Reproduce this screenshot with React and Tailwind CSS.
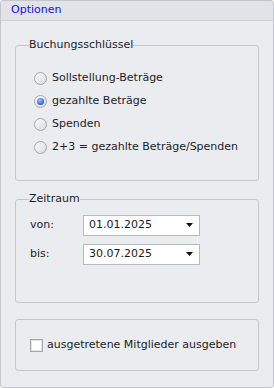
import React from "react";

const font = { fontFamily: '"DejaVu Sans", Tahoma, sans-serif' };

function Radio({ checked, label }) {
  return (
    <div className="flex items-center h-[23px]">
      <span className="relative w-[13px] h-[13px] rounded-full border border-[#a4a6ae] bg-gradient-to-br from-[#fbfbfc] to-[#d9dadf] flex items-center justify-center shrink-0">
        {checked && (
          <span className="w-[7px] h-[7px] rounded-full bg-[radial-gradient(circle_at_40%_35%,#9fc0ff,#2c5fd8_70%)]" />
        )}
      </span>
      <span className="ml-[5px] text-[11px] text-[#1c1c24]">{label}</span>
    </div>
  );
}

function Combo({ value }) {
  return (
    <div className="flex items-center w-[117px] h-[21px] bg-white border border-[#b7b9c0] pl-[5px] pr-[6px]">
      <span className="flex-1 text-[11px] text-[#1c1c24]">{value}</span>
      <svg width="7" height="4" viewBox="0 0 7 4"><path d="M0 0h7L3.5 4z" fill="#111" /></svg>
    </div>
  );
}

export default function App() {
  return (
    <div className="w-[274px] h-[388px] bg-white" style={font}>
      <div className="w-[274px] h-[388px] border border-[#c4c6cd] rounded-[3px] bg-[#ebecf0] flex flex-col overflow-hidden">
        <div className="h-[20px] bg-[#e2e3e8] border-b border-[#d0d2d8] flex items-center pl-[10px] shrink-0">
          <span className="text-[11px] text-[#1010f0]">Optionen</span>
        </div>
        <div className="flex flex-col px-[14px]">
          <fieldset className="mt-[16px] h-[144px] border border-[#c4c6cd] rounded-[3px] px-0">
            <legend className="ml-[13px] px-0 text-[11px] text-[#1c1c24]">Buchungsschlüssel</legend>
            <div className="mt-[13px] pl-[18px] flex flex-col">
              <Radio label="Sollstellung-Beträge" />
              <Radio checked label="gezahlte Beträge" />
              <Radio label="Spenden" />
              <Radio label="2+3 = gezahlte Beträge/Spenden" />
            </div>
          </fieldset>
          <fieldset className="mt-[10px] h-[112px] border border-[#c4c6cd] rounded-[3px] px-0">
            <legend className="ml-[13px] px-0 text-[11px] text-[#1c1c24]">Zeitraum</legend>
            <div className="mt-[7px] pl-[14px] flex flex-col gap-[8px]">
              <div className="flex items-center">
                <span className="w-[53px] text-[11px] text-[#1c1c24]">von:</span>
                <Combo value="01.01.2025" />
              </div>
              <div className="flex items-center">
                <span className="w-[53px] text-[11px] text-[#1c1c24]">bis:</span>
                <Combo value="30.07.2025" />
              </div>
            </div>
          </fieldset>
          <div className="mt-[16px] h-[52px] border border-[#c4c6cd] rounded-[3px] pl-[14px] flex items-center">
            <span className="w-[13px] h-[13px] border border-[#a4a6ae] bg-white shadow-[inset_0_0_0_1px_#e2e3e8] shrink-0" />
            <span className="ml-[4px] text-[11px] text-[#1c1c24]">ausgetretene Mitglieder ausgeben</span>
          </div>
        </div>
      </div>
    </div>
  );
}
